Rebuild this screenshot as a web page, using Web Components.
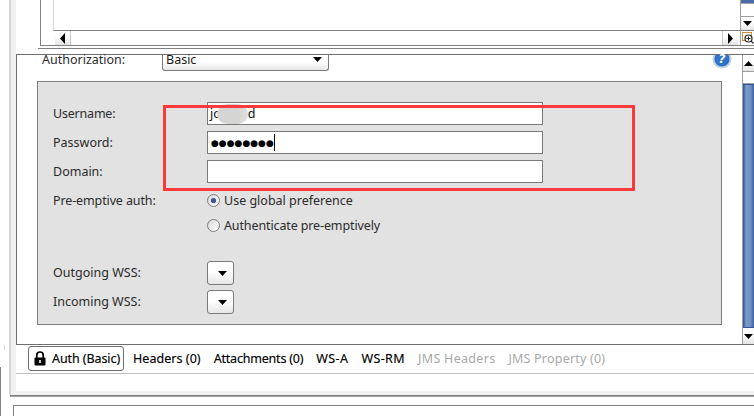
<!DOCTYPE html>
<html>
<head>
<meta charset="utf-8">
<title>Auth</title>
<style>
html, body { margin: 0; padding: 0; background: #fff; }
</style>
</head>
<body>
<soap-app></soap-app>
<script>
const arrows = {
  up: 'M0 5 L4.5 0 L9 5 Z',
  down: 'M0 0 L9 0 L4.5 5 Z',
  left: 'M5 0 L5 11 L0 5.5 Z',
  right: 'M0 0 L5 5.5 L0 11 Z'
}

// small button with a black triangle, used by all the scrollbars
class ArrowButton extends HTMLElement {
  connectedCallback () {
    const dir = this.getAttribute('dir') || 'down'
    const horizontal = dir === 'left' || dir === 'right'
    this.attachShadow({ mode: 'open' }).innerHTML = `
    <style>
    :host { display: flex; align-items: center; justify-content: center; box-sizing: border-box; background: linear-gradient(#fff 40%, #e4e4e4); flex: none; }
    svg { display: block; }
    </style>
    <svg width="${horizontal ? 5 : 9}" height="${horizontal ? 11 : 5}"><path d="${arrows[dir]}" fill="#000"/></svg>`
  }
}
customElements.define('arrow-button', ArrowButton)

// vertical scrollbar next to the form
class VScroll extends HTMLElement {
  connectedCallback () {
    this.attachShadow({ mode: 'open' }).innerHTML = `
    <style>
    :host { display: flex; flex-direction: column; width: 12px; flex: none; background: #fff; box-sizing: border-box; border-left: 1px solid #a0a0a0; }
    .track { height: 13px; border-bottom: 1px solid #a0a0a0; border-top: 1px solid #a0a0a0; box-sizing: border-box; flex: none; }
    .thumb { flex: 1; background: linear-gradient(90deg, #2f5597, #7d9bcb 30%, #6f8fc2 70%, #3a5f9f); border-top: 1px solid #2f5597; border-bottom: 1px solid #2f5597; }
    arrow-button { height: 16px; }
    </style>
    <arrow-button dir="up"></arrow-button>
    <div class="track"></div>
    <div class="thumb"></div>
    <arrow-button dir="down"></arrow-button>`
  }
}
customElements.define('v-scroll', VScroll)

// upper pane: message list cut by the crop, with its scrollbars
class TopPane extends HTMLElement {
  constructor () {
    super()
    this.attachShadow({ mode: 'open' }).innerHTML = `
    <style>
    :host { display: block; height: 46px; margin-left: 40px; box-sizing: border-box; border-left: 1px solid #808080; border-bottom: 1px solid #808080; }
    .main { display: flex; height: 31px; }
    .list { flex: 1; margin-left: 12px; border-left: 1px solid #d8d8d8; border-bottom: 1px solid #808080; }
    .side { width: 14px; flex: none; display: flex; flex-direction: column; border-left: 1px solid #a0a0a0; border-bottom: 1px solid #808080; box-sizing: border-box; }
    .thumb { height: 3px; background: #4a6ca8; flex: none; }
    .track { height: 12px; flex: none; border-top: 1px solid #a0a0a0; border-bottom: 1px solid #a0a0a0; }
    .side arrow-button { flex: 1; }
    .bottom { display: flex; height: 14px; }
    .bottom .gap { width: 14px; flex: none; }
    .bottom arrow-button { width: 15px; }
    .bottom .track2 { flex: 1; border-left: 1px solid #c8c8c8; border-right: 1px solid #c8c8c8; }
    .corner { width: 14px; flex: none; margin-left: 2px; display: flex; align-items: center; justify-content: center; border-left: 1px solid #a0a0a0; box-sizing: border-box; }
    </style>
    <div class="main">
      <div class="list"></div>
      <div class="side"><div class="thumb"></div><div class="track"></div><arrow-button dir="down"></arrow-button></div>
    </div>
    <div class="bottom">
      <div class="gap"></div>
      <arrow-button dir="left"></arrow-button>
      <div class="track2"></div>
      <arrow-button dir="right"></arrow-button>
      <div class="corner">
        <svg width="12" height="12" viewBox="0 0 12 12"><rect x="0.5" y="0.5" width="9" height="8" fill="none" stroke="#d98b3a"/><circle cx="6.5" cy="6.5" r="3.5" fill="#fff" stroke="#222" stroke-width="1.2"/><path d="M4.5 6.5H8.5M6.5 4.5V8.5M9 9L11.5 11.5" stroke="#222" stroke-width="1.1" fill="none"/></svg>
      </div>
    </div>`
  }
}
customElements.define('top-pane', TopPane)

// rounded combo box, with or without a value
class DropDown extends HTMLElement {
  constructor () {
    super()
    this.attachShadow({ mode: 'open' }).innerHTML = `
    <style>
    :host { display: flex; align-items: center; justify-content: space-between; box-sizing: border-box; border: 1px solid #7a7a7a; border-radius: 3px; background: linear-gradient(#fff 45%, #e6e6e6); padding: 0 3px 0 3px; height: 24px; width: 27px; flex: none; color: #1a1a1a; }
    svg { display: block; margin-left: auto; margin-right: 3px; }
    </style>
    <slot></slot>
    <svg width="9" height="5"><path d="${arrows.down}" fill="#000"/></svg>`
  }
}
customElements.define('drop-down', DropDown)

// one label + control line of the grey form
class FormRow extends HTMLElement {
  constructor () {
    super()
    this.attachShadow({ mode: 'open' }).innerHTML = `
    <style>
    :host { display: grid; grid-template-columns: 154px auto; align-items: center; height: var(--h, 23px); justify-content: start; }
    .label { color: #2b2b2b; white-space: nowrap; padding-bottom: var(--lift, 0); }
    </style>
    <div class="label"><slot name="label"></slot></div>
    <slot></slot>`
  }
}
customElements.define('form-row', FormRow)

class TextField extends HTMLElement {
  constructor () {
    super()
    this.attachShadow({ mode: 'open' }).innerHTML = `
    <style>
    :host { display: flex; align-items: center; box-sizing: border-box; width: 336px; height: 23px; border: 1px solid #7a7a7a; background: #fff; padding-left: 2px; color: #111; white-space: nowrap; }
    </style>
    <slot></slot>`
  }
}
customElements.define('text-field', TextField)

class RadioOption extends HTMLElement {
  constructor () {
    super()
    const on = this.hasAttribute('checked')
    this.attachShadow({ mode: 'open' }).innerHTML = `
    <style>
    :host { display: flex; align-items: center; gap: 4px; color: #2b2b2b; white-space: nowrap; }
    svg { display: block; flex: none; }
    </style>
    <svg width="13" height="13" viewBox="0 0 13 13">
      <defs><linearGradient id="g" x1="0" y1="0" x2="1" y2="1"><stop offset="0" stop-color="#d8d8d8"/><stop offset="1" stop-color="#fff"/></linearGradient></defs>
      <circle cx="6.5" cy="6.5" r="6" fill="url(#g)" stroke="#7d7d7d"/>
      ${on ? '<circle cx="6.5" cy="6.5" r="2.6" fill="#41548c"/>' : ''}
    </svg>
    <slot></slot>`
  }
}
customElements.define('radio-option', RadioOption)

// the grey block with credentials
class CredentialsForm extends HTMLElement {
  constructor () {
    super()
    this.attachShadow({ mode: 'open' }).innerHTML = `
    <style>
    :host { display: block; box-sizing: border-box; height: 244px; margin: 10px 20px 0 20px; border: 1px solid #7d7d7d; background: #e2e2e2; padding: 20px 0 0 15px; }
    form-row + form-row { margin-top: 6px; }
    .pre { --h: 20px; margin-top: 7px; }
    .auth2 { --h: 20px; margin-top: 5px; }
    .wss1 { --h: 24px; --lift: 2px; margin-top: 26px; }
    .wss2 { --h: 24px; --lift: 2px; margin-top: 5px; }
    .blob { display: inline-block; width: 31px; height: 20px; margin: 0 0 0 -4px; background: linear-gradient(90deg, #d5d5d3 70%, #e0e0de); border-radius: 10px; vertical-align: middle; }
    .dots { font: 9px "DejaVu Sans", sans-serif; letter-spacing: 0; color: #000; margin-left: 1px; }
    .caret { width: 1px; height: 17px; background: #000; margin-left: 0; flex: none; }
    .user { letter-spacing: -0.2px; }
    .tight { letter-spacing: -0.12px; }
    </style>
    <form-row><span slot="label" class="user">Username:</span><text-field>jo<span class="blob"></span>d</text-field></form-row>
    <form-row><span slot="label">Password:</span><text-field><span class="dots">●●●●●●●●</span><span class="caret"></span></text-field></form-row>
    <form-row><span slot="label">Domain:</span><text-field></text-field></form-row>
    <form-row class="pre"><span slot="label" class="tight">Pre-emptive auth:</span><radio-option checked>Use global preference</radio-option></form-row>
    <form-row class="auth2"><span slot="label"></span><radio-option class="tight">Authenticate pre-emptively</radio-option></form-row>
    <form-row class="wss1"><span slot="label">Outgoing WSS:</span><drop-down></drop-down></form-row>
    <form-row class="wss2"><span slot="label">Incoming WSS:</span><drop-down></drop-down></form-row>`
  }
}
customElements.define('credentials-form', CredentialsForm)

// help button, only its lower part shows below the rule
class HelpIcon extends HTMLElement {
  constructor () {
    super()
    this.attachShadow({ mode: 'open' }).innerHTML = `
    <style>
    :host { display: flex; justify-content: center; align-items: flex-start; width: 20px; height: 14px; flex: none; background: radial-gradient(circle at 10px 4px, #2e73c9 7px, #8fb0d8 7.6px, #c9d3e0 8.2px, #c9d3e0 9.2px, transparent 9.8px); color: #fff; font: italic bold 12px/9px "DejaVu Sans", sans-serif; }
    </style>
    <span>?</span>`
  }
}
customElements.define('help-icon', HelpIcon)

// panel between the two horizontal rules, its controls start right at the top rule
class AuthPanel extends HTMLElement {
  constructor () {
    super()
    this.attachShadow({ mode: 'open' }).innerHTML = `
    <style>
    :host { display: flex; height: 291px; box-sizing: border-box; margin: 5px 0 0 16px; border-left: 1px solid #6e6e6e; border-top: 1px solid #6e6e6e; border-bottom: 1px solid #6e6e6e; }
    .content { flex: 1; min-width: 0; }
    .head { display: flex; align-items: flex-start; height: 16px; padding-left: 25px; color: #2b2b2b; }
    .head .lbl { width: 120px; flex: none; line-height: 10px; }
    .head drop-down { width: 167px; height: 16px; border-top: none; border-radius: 0 0 3px 3px; padding-bottom: 6px; padding-left: 3px; }
    .head help-icon { margin-left: auto; margin-right: 10px; }
    </style>
    <div class="content">
      <div class="head">
        <span class="lbl">Authorization:</span>
        <drop-down>Basic</drop-down>
        <help-icon></help-icon>
      </div>
      <credentials-form></credentials-form>
    </div>
    <v-scroll></v-scroll>`
  }
}
customElements.define('auth-panel', AuthPanel)

class LockIcon extends HTMLElement {
  constructor () {
    super()
    this.attachShadow({ mode: 'open' }).innerHTML = `
    <style>
    :host { display: block; width: 12px; height: 15px; flex: none; }
    svg { display: block; }
    </style>
    <svg width="12" height="15" viewBox="0 0 12 15">
      <path d="M2.8 7V4.2a3.2 3.2 0 0 1 6.4 0V7" fill="none" stroke="#000" stroke-width="1.7"/>
      <rect x="0.5" y="6.5" width="11" height="8" rx="1" fill="#000"/>
      <rect x="5.2" y="9" width="1.6" height="3" fill="#fff"/>
    </svg>`
  }
}
customElements.define('lock-icon', LockIcon)

class TabItem extends HTMLElement {
  constructor () {
    super()
    this.attachShadow({ mode: 'open' }).innerHTML = `
    <style>
    :host { display: flex; align-items: center; white-space: nowrap; color: #000; letter-spacing: var(--ls, 0); -webkit-text-stroke: 0.15px currentColor; }
    :host([off]) { color: #a8a8a8; -webkit-text-stroke: 0; }
    :host([active]) { box-sizing: border-box; width: 96px; height: 25px; margin-right: -4px; padding: 0 0 0 5px; gap: 6px; border: 1px solid #6e6e6e; border-radius: 3px; letter-spacing: -0.08px; }
    </style>
    <slot></slot>`
  }
}
customElements.define('tab-item', TabItem)

class TabBar extends HTMLElement {
  constructor () {
    super()
    this.attachShadow({ mode: 'open' }).innerHTML = `
    <style>
    :host { display: flex; align-items: center; gap: 13px; box-sizing: border-box; height: 29px; margin-left: 16px; padding: 0 0 1px 12px; border-bottom: 1px solid #c0c0c0; }
    </style>
    <slot></slot>`
  }
}
customElements.define('tab-bar', TabBar)

// whole window crop
class SoapApp extends HTMLElement {
  constructor () {
    super()
    this.attachShadow({ mode: 'open' }).innerHTML = `
    <style>
    :host { display: block; position: relative; width: 754px; height: 416px; overflow: hidden; background: #fff; font: 12.5px "Noto Sans", sans-serif; }
    .rule { height: 1px; margin: 2px 0 0 38px; background: #808080; }
    .gutter { position: absolute; left: 9px; top: 0; width: 7px; height: 395px; box-sizing: border-box; border-left: 2px solid #d6d6d6; background: #f0f0f0; }
    .foot { height: 17px; margin-left: 16px; }
    .strip { height: 4px; background: #f0f0f0; margin-left: 11px; }
    .sep { height: 2px; margin-left: 10px; background: linear-gradient(#707070, #b0b0b0); }
    .lower { height: 30px; margin: 8px 0 0 13px; border-top: 1px solid #808080; border-left: 1px solid #808080; }
    .edge { position: absolute; left: 0; top: 367px; bottom: 0; width: 1px; background: #808080; }
    .tick { position: absolute; left: 4px; top: 345px; width: 1px; height: 5px; background: #d8d8d8; }
    .mark { position: absolute; left: 163px; top: 105px; width: 472px; height: 86px; box-sizing: border-box; border: 3px solid #fb3b3b; }
    </style>
    <div class="gutter"></div>
    <div class="edge"></div>
    <div class="tick"></div>
    <top-pane></top-pane>
    <div class="rule"></div>
    <auth-panel></auth-panel>
    <tab-bar>
      <tab-item active><lock-icon></lock-icon>Auth (Basic)</tab-item>
      <tab-item style="--ls:0.05px">Headers (0)</tab-item>
      <tab-item style="--ls:-0.2px">Attachments (0)</tab-item>
      <tab-item style="--ls:0.4px">WS-A</tab-item>
      <tab-item style="--ls:0.4px">WS-RM</tab-item>
      <tab-item off style="--ls:0.3px">JMS Headers</tab-item>
      <tab-item off style="--ls:0.2px">JMS Property (0)</tab-item>
    </tab-bar>
    <div class="foot"></div>
    <div class="strip"></div>
    <div class="sep"></div>
    <div class="lower"></div>
    <div class="mark"></div>`
  }
}
customElements.define('soap-app', SoapApp)
</script>
</body>
</html>
